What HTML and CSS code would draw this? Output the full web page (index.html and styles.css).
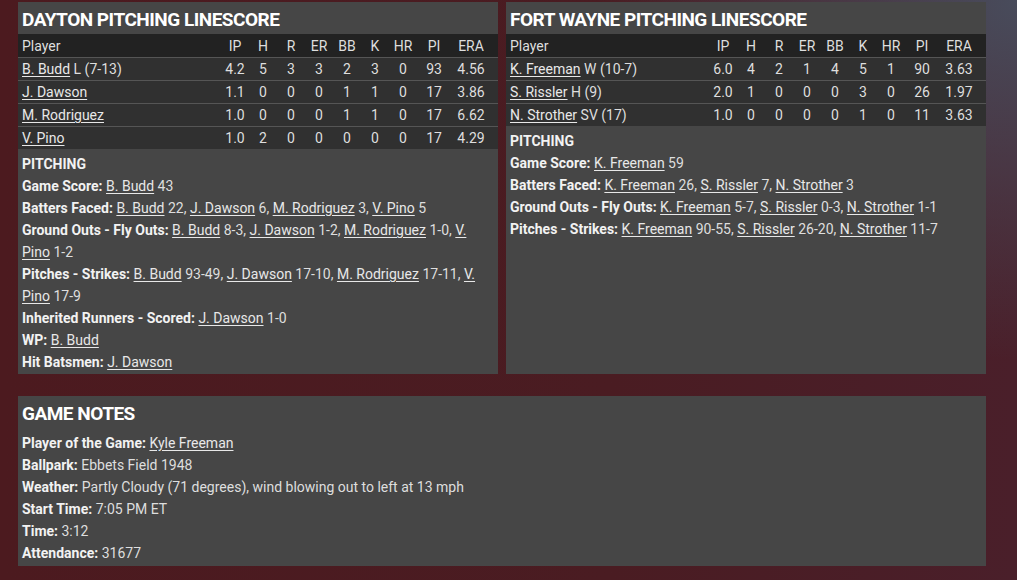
FILE: index.html
```html
<!DOCTYPE html>
<html lang="en">
<head>
    <meta charset="UTF-8">
    <meta name="viewport" content="width=device-width, initial-scale=1.0">
    <title>Box Score - Pitching</title>
    <link rel="stylesheet" href="styles.css">
</head>
<body>
    <div class="page">
        <div class="linescores">
            <div class="panel">
                <h2 class="panel-title">Dayton Pitching Linescore</h2>
                <table class="stats">
                    <thead>
                        <tr>
                            <th class="player">Player</th>
                            <th>IP</th><th>H</th><th>R</th><th>ER</th><th>BB</th><th>K</th><th>HR</th><th class="pi">PI</th><th class="era">ERA</th>
                        </tr>
                    </thead>
                    <tbody>
                        <tr>
                            <td class="player"><a href="#">B. Budd</a> L (7-13)</td>
                            <td>4.2</td><td>5</td><td>3</td><td>3</td><td>2</td><td>3</td><td>0</td><td>93</td><td>4.56</td>
                        </tr>
                        <tr>
                            <td class="player"><a href="#">J. Dawson</a></td>
                            <td>1.1</td><td>0</td><td>0</td><td>0</td><td>1</td><td>1</td><td>0</td><td>17</td><td>3.86</td>
                        </tr>
                        <tr>
                            <td class="player"><a href="#">M. Rodriguez</a></td>
                            <td>1.0</td><td>0</td><td>0</td><td>0</td><td>1</td><td>1</td><td>0</td><td>17</td><td>6.62</td>
                        </tr>
                        <tr>
                            <td class="player"><a href="#">V. Pino</a></td>
                            <td>1.0</td><td>2</td><td>0</td><td>0</td><td>0</td><td>0</td><td>0</td><td>17</td><td>4.29</td>
                        </tr>
                    </tbody>
                </table>
                <div class="notes">
                    <p><b>PITCHING</b></p>
                    <p><b>Game Score:</b> <a href="#">B. Budd</a> 43</p>
                    <p><b>Batters Faced:</b> <a href="#">B. Budd</a> 22, <a href="#">J. Dawson</a> 6, <a href="#">M. Rodriguez</a> 3, <a href="#">V. Pino</a> 5</p>
                    <p><b>Ground Outs - Fly Outs:</b> <a href="#">B. Budd</a> 8-3, <a href="#">J. Dawson</a> 1-2, <a href="#">M. Rodriguez</a> 1-0, <a href="#">V. Pino</a> 1-2</p>
                    <p><b>Pitches - Strikes:</b> <a href="#">B. Budd</a> 93-49, <a href="#">J. Dawson</a> 17-10, <a href="#">M. Rodriguez</a> 17-11, <a href="#">V. Pino</a> 17-9</p>
                    <p><b>Inherited Runners - Scored:</b> <a href="#">J. Dawson</a> 1-0</p>
                    <p><b>WP:</b> <a href="#">B. Budd</a></p>
                    <p><b>Hit Batsmen:</b> <a href="#">J. Dawson</a></p>
                </div>
            </div>

            <div class="panel">
                <h2 class="panel-title">Fort Wayne Pitching Linescore</h2>
                <table class="stats">
                    <thead>
                        <tr>
                            <th class="player">Player</th>
                            <th>IP</th><th>H</th><th>R</th><th>ER</th><th>BB</th><th>K</th><th>HR</th><th class="pi">PI</th><th class="era">ERA</th>
                        </tr>
                    </thead>
                    <tbody>
                        <tr>
                            <td class="player"><a href="#">K. Freeman</a> W (10-7)</td>
                            <td>6.0</td><td>4</td><td>2</td><td>1</td><td>4</td><td>5</td><td>1</td><td>90</td><td>3.63</td>
                        </tr>
                        <tr>
                            <td class="player"><a href="#">S. Rissler</a> H (9)</td>
                            <td>2.0</td><td>1</td><td>0</td><td>0</td><td>0</td><td>3</td><td>0</td><td>26</td><td>1.97</td>
                        </tr>
                        <tr>
                            <td class="player"><a href="#">N. Strother</a> SV (17)</td>
                            <td>1.0</td><td>0</td><td>0</td><td>0</td><td>0</td><td>1</td><td>0</td><td>11</td><td>3.63</td>
                        </tr>
                    </tbody>
                </table>
                <div class="notes">
                    <p><b>PITCHING</b></p>
                    <p><b>Game Score:</b> <a href="#">K. Freeman</a> 59</p>
                    <p><b>Batters Faced:</b> <a href="#">K. Freeman</a> 26, <a href="#">S. Rissler</a> 7, <a href="#">N. Strother</a> 3</p>
                    <p><b>Ground Outs - Fly Outs:</b> <a href="#">K. Freeman</a> 5-7, <a href="#">S. Rissler</a> 0-3, <a href="#">N. Strother</a> 1-1</p>
                    <p><b>Pitches - Strikes:</b> <a href="#">K. Freeman</a> 90-55, <a href="#">S. Rissler</a> 26-20, <a href="#">N. Strother</a> 11-7</p>
                </div>
            </div>
        </div>

        <div class="panel game-notes">
            <h2 class="panel-title">Game Notes</h2>
            <div class="notes">
                <p><b>Player of the Game:</b> <a href="#">Kyle Freeman</a></p>
                <p><b>Ballpark:</b> Ebbets Field 1948</p>
                <p><b>Weather:</b> Partly Cloudy (71 degrees), wind blowing out to left at 13 mph</p>
                <p><b>Start Time:</b> 7:05 PM ET</p>
                <p><b>Time:</b> 3:12</p>
                <p><b>Attendance:</b> 31677</p>
            </div>
        </div>
    </div>
</body>
</html>
```

FILE: styles.css
```css
html, body {
    margin: 0;
    height: 100%;
}

body {
    font-family: 'Roboto', sans-serif;
    font-size: 14px;
    color: #dedede;
    background-color: #4a1a20;
    background-image:
        radial-gradient(ellipse 420px 360px at 100% 0%, rgba(72, 78, 94, 0.95), rgba(72, 78, 94, 0) 100%),
        linear-gradient(90deg, #4c1a1f 0%, #4a1c22 60%, #4a1f2a 100%);
}

.page {
    padding: 2px 31px 0 18px;
}

.linescores {
    display: grid;
    grid-template-columns: 480px 480px;
    gap: 8px;
}

.panel {
    background: #464646;
}

.panel-title {
    margin: 0;
    height: 32px;
    line-height: 36px;
    padding-left: 4px;
    font-size: 19px;
    letter-spacing: -0.5px;
    font-weight: bold;
    text-transform: uppercase;
    color: #fff;
}

.stats {
    width: 100%;
    border-collapse: collapse;
}

.stats th,
.stats td {
    height: 22px;
    padding: 0;
    text-align: center;
    width: 28px;
    font-weight: normal;
}

.stats th {
    background: #222;
    height: 23px;
}

.stats td {
    background: #303030;
    border-top: 1px solid #555;
}

.stats .player {
    width: auto;
    text-align: left;
    padding-left: 4px;
}

.stats .pi {
    width: 34px;
}

.stats .era {
    width: 40px;
    padding-right: 7px;
}

.stats td:last-child {
    padding-right: 7px;
}

a {
    color: #e8e8e8;
    text-decoration: underline;
    text-underline-offset: 2px;
}

.notes {
    padding: 4px 4px 1px;
}

.notes p {
    margin: 0;
    line-height: 22px;
}

.notes b {
    color: #f2f2f2;
}

.game-notes {
    margin-top: 22px;
    width: 968px;
}

.game-notes .notes {
    padding-bottom: 2px;
}
```
